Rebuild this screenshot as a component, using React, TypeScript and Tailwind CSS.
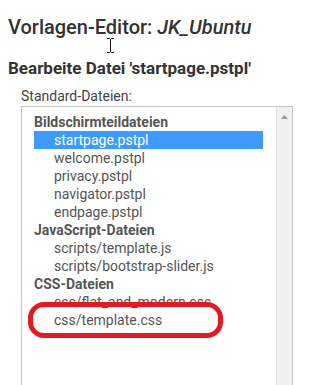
import React from 'react';

const groups = [
  {
    name: 'Bildschirmteildateien',
    files: ['startpage.pstpl', 'welcome.pstpl', 'privacy.pstpl', 'navigator.pstpl', 'endpage.pstpl'],
  },
  { name: 'JavaScript-Dateien', files: ['scripts/template.js', 'scripts/bootstrap-slider.js'] },
  { name: 'CSS-Dateien', files: ['css/flat_and_modern.css', 'css/template.css'] },
];

const App: React.FC = () => {
  return (
    <div className="relative w-[322px] h-[385px] overflow-hidden bg-white font-['Roboto',sans-serif] text-[#333]">
      <div className="pl-[8px] pt-[14px]">
        <h1 className="text-[20px] leading-[26px] font-medium">
          Vorlagen-Editor: <i>JK_Ubuntu</i>
        </h1>
        <h2 className="mt-[18px] text-[17px] leading-[20px] font-bold">Bearbeite Datei 'startpage.pstpl'</h2>
      </div>

      <div className="ml-[21px] mt-[10px]">
        <p className="text-[14px] leading-[16px] text-[#444]">Standard-Dateien:</p>
        <div className="mt-[2px] w-[272px] h-[300px] flex border border-[#c4c4c4]">
          <div className="flex-1 pt-[6px] pl-[12px] pr-[13px] text-[14px] leading-[18px] text-[#555]">
            {groups.map((g) => (
              <div key={g.name}>
                <div className="font-bold">{g.name}</div>
                {g.files.map((f) => (
                  <div
                    key={f}
                    className={f === 'startpage.pstpl' ? 'pl-[20px] bg-[#3d9bff] text-white' : 'pl-[20px] whitespace-nowrap'}
                  >
                    {f}
                  </div>
                ))}
              </div>
            ))}
          </div>
          <div className="w-[16px] bg-[#f0f0f0] border-l border-[#e2e2e2] flex justify-center pt-[8px]">
            <svg width="7" height="4" viewBox="0 0 7 4">
              <path d="M0 4 L3.5 0 L7 4 Z" fill="#999" />
            </svg>
          </div>
        </div>
      </div>

      {/* annotation ring */}
      <div className="absolute left-[28px] top-[302px] w-[195px] h-[36px] rounded-[16px] border-[5px] border-[#e01b24]" />

      {/* mouse cursor */}
      <svg className="absolute left-[106px] top-[38px]" width="9" height="15" viewBox="0 0 9 15">
        <path d="M1 0.5 H3.5 L4.5 1.5 L5.5 0.5 H8 M4.5 1.5 V13.5 M1 14.5 H3.5 L4.5 13.5 L5.5 14.5 H8" stroke="#111" strokeWidth="1" fill="none" />
      </svg>
    </div>
  );
};

export default App;
